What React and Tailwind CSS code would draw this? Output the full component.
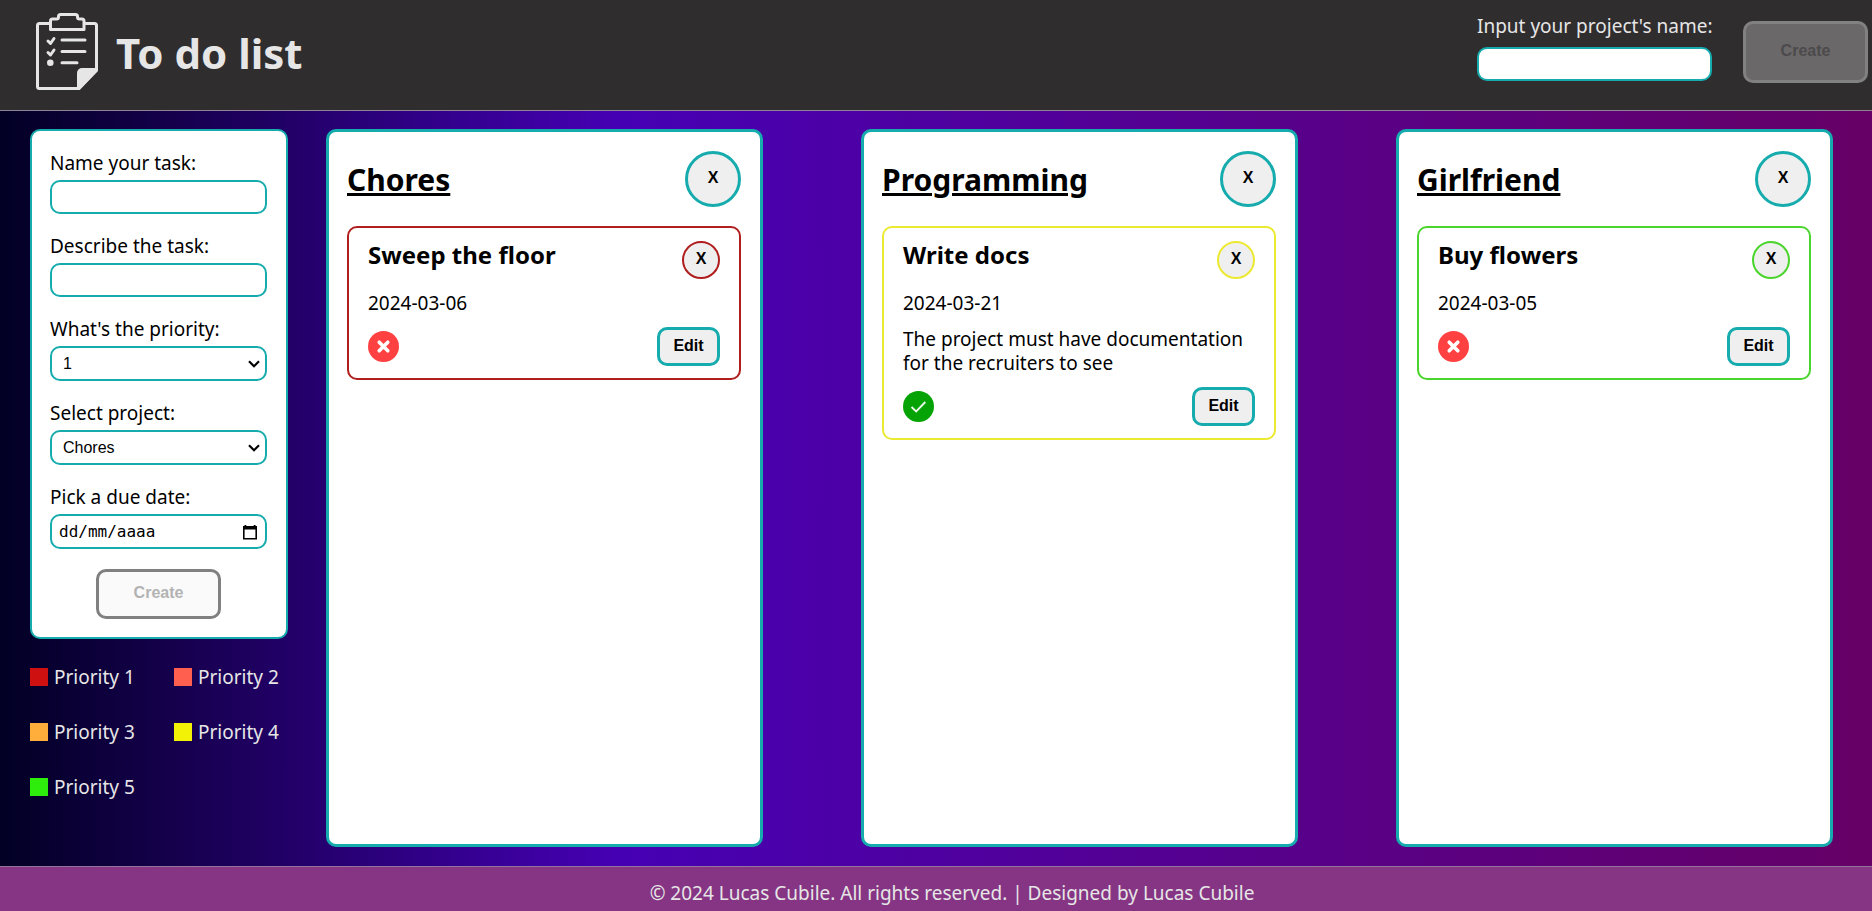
import React from "react";

const priorities = [
  { id: 1, swatch: "bg-[#cf1010]" },
  { id: 2, swatch: "bg-[#ff5f4f]" },
  { id: 3, swatch: "bg-[#ffae3c]" },
  { id: 4, swatch: "bg-[#f2f207]" },
  { id: 5, swatch: "bg-[#2eec0c]" },
];

const projects = [
  {
    name: "Chores",
    tasks: [{ title: "Sweep the floor", date: "2024-03-06", done: false, border: "border-[#b01e1e]" }],
  },
  {
    name: "Programming",
    tasks: [
      {
        title: "Write docs",
        date: "2024-03-21",
        description: "The project must have documentation for the recruiters to see",
        done: true,
        border: "border-[#ecea30]",
      },
    ],
  },
  {
    name: "Girlfriend",
    tasks: [{ title: "Buy flowers", date: "2024-03-05", done: false, border: "border-[#4ad52c]" }],
  },
];

const field =
  "w-full rounded-[10px] border-2 border-[#16abad] bg-white font-['Liberation_Sans',Arial,sans-serif] text-base text-black";

const button = "border-[3px] font-['Liberation_Sans',Arial,sans-serif] text-base font-bold";

function ClipboardLogo() {
  return (
    <svg
      className="h-[77px] w-[62px] shrink-0"
      viewBox="0 0 62 77"
      fill="none"
      stroke="#e6e6e6"
      strokeWidth="3"
      strokeLinecap="round"
      strokeLinejoin="round"
      aria-hidden="true"
    >
      <path d="M13.500 10.500H3.500a2 2 0 0 0-2 2V73.500a2 2 0 0 0 2 2H43L60.500 57V12.500a2 2 0 0 0-2-2H48.500" />
      <path d="M14.500 8a2 2 0 0 1 2-2h4a2 2 0 0 0 2-2v-.500a2 2 0 0 1 2-2h15a2 2 0 0 1 2 2V4a2 2 0 0 0 2 2H46a2 2 0 0 1 2 2v8.500H14.500z" />
      <path d="M26 27H49M26 38.500H49M26 49.800H41" />
      <path d="M12 28l2.500 2.500L18 25.500M12 39.500l2.500 2.500L18 37" />
      <circle cx="14.300" cy="49.800" r="3.300" fill="#e6e6e6" stroke="none" />
      <path d="M41 77V60a5 5 0 0 1 5-5H62V58L43.500 77z" fill="#e6e6e6" stroke="none" />
    </svg>
  );
}

function StatusIcon({ done }) {
  return done ? (
    <svg className="size-[31px]" viewBox="0 0 31 31" role="img" aria-label="Done">
      <circle cx="15.500" cy="15.500" r="15.500" fill="#06a306" />
      <path d="M8.500 16l4.700 4.500L22.300 11" fill="none" stroke="#e9f7e9" strokeWidth="1.900" />
    </svg>
  ) : (
    <svg className="size-[31px]" viewBox="0 0 31 31" role="img" aria-label="Pending">
      <circle cx="15.500" cy="15.500" r="15.500" fill="#ff4141" />
      <path d="M11.200 11.200l8.600 8.600M19.800 11.200l-8.600 8.600" fill="none" stroke="#fff" strokeWidth="3.600" strokeLinecap="round" />
    </svg>
  );
}

function CalendarIcon() {
  return (
    <svg className="size-4" viewBox="0 0 16 16" aria-hidden="true">
      <path d="M2.500 1h1.800v1h7.400V1h1.800v1H15v13.500H1V2h1.500zM2.600 5.500V14h10.800V5.500z" fill="#000" fillRule="evenodd" />
    </svg>
  );
}

function Field({ id, label, children }) {
  return (
    <div className="flex w-full flex-col gap-[5px]">
      <label htmlFor={id}>{label}</label>
      {children}
    </div>
  );
}

function Select({ id, options }) {
  return (
    <div className="relative">
      <select id={id} className={`${field} block h-[35px] appearance-none pr-8 pl-[11px]`}>
        {options.map((option) => (
          <option key={option}>{option}</option>
        ))}
      </select>
      <svg className="pointer-events-none absolute top-3 right-[7px] h-3 w-3" viewBox="0 0 12 12" aria-hidden="true">
        <path d="M1 3.200l5 5 5-5" fill="none" stroke="#000" strokeWidth="2.200" />
      </svg>
    </div>
  );
}

function TaskForm() {
  return (
    <form className="flex flex-col items-center gap-5 rounded-[10px] border-2 border-[#16abad] bg-white pt-5 pr-[19px] pb-[18px] pl-[18px] text-black">
      <Field id="task-name" label="Name your task:">
        <input id="task-name" type="text" className={`${field} h-[34px] px-2`} />
      </Field>
      <Field id="task-description" label="Describe the task:">
        <input id="task-description" type="text" className={`${field} h-[34px] px-2`} />
      </Field>
      <Field id="task-priority" label="What's the priority:">
        <Select id="task-priority" options={priorities.map((p) => p.id)} />
      </Field>
      <Field id="task-project" label="Select project:">
        <Select id="task-project" options={projects.map((p) => p.name)} />
      </Field>
      <Field id="task-date" label="Pick a due date:">
        <div className="flex h-[35px] items-center rounded-[10px] border-2 border-[#16abad] px-[7px]">
          <input
            id="task-date"
            type="text"
            placeholder="dd/mm/aaaa"
            className="min-w-0 flex-1 bg-transparent font-['DejaVu_Sans_Mono',monospace] text-base outline-none placeholder:text-black"
          />
          <button type="button" aria-label="Open calendar">
            <CalendarIcon />
          </button>
        </div>
      </Field>
      <button
        type="submit"
        disabled
        className={`${button} h-[50px] w-[125px] rounded-[10px] border-[#808080] bg-[#fafafa] pb-0.5 text-[#b3b3b3]`}
      >
        Create
      </button>
    </form>
  );
}

function Task({ task }) {
  return (
    <article className={`flex flex-col gap-3 rounded-[10px] border-2 px-[19px] pt-[13px] pb-3 ${task.border}`}>
      <div className="flex items-start justify-between">
        <h3 className="text-2xl leading-7 font-bold">{task.title}</h3>
        <button
          type="button"
          aria-label={`Delete ${task.title}`}
          className={`size-[38px] shrink-0 rounded-full border-2 bg-[#efefef] pb-0.5 font-['Liberation_Sans',Arial,sans-serif] text-base font-bold ${task.border}`}
        >
          X
        </button>
      </div>
      <p>{task.date}</p>
      {task.description && <p>{task.description}</p>}
      <div className="flex items-center justify-between">
        <StatusIcon done={task.done} />
        <button type="button" className={`${button} h-[39px] w-[63px] rounded-[10px] border-[#16abad] bg-[#efefef] pb-0.5`}>
          Edit
        </button>
      </div>
    </article>
  );
}

function Project({ project }) {
  return (
    <section className="flex flex-col gap-[19px] rounded-[10px] border-[3px] border-[#16abad] bg-white py-[19px] pr-[19px] pl-[18px] text-black">
      <div className="flex items-center justify-between">
        <h2 className="pt-0.5 text-[30px] leading-9 font-bold underline">{project.name}</h2>
        <button
          type="button"
          aria-label={`Delete ${project.name}`}
          className={`${button} size-14 shrink-0 rounded-full border-[#16abad] bg-[#efefef] pb-0.5`}
        >
          X
        </button>
      </div>
      {project.tasks.map((task) => (
        <Task key={task.title} task={task} />
      ))}
    </section>
  );
}

export default function App() {
  return (
    <div className="flex min-h-screen flex-col bg-[linear-gradient(90deg,#020024_0%,#4600b4_33%,#660066_100%)] font-['Noto_Sans',sans-serif] text-[19px] leading-6 text-[#e6e6e6]">
      <header className="flex h-[111px] items-start justify-between border-b border-[#8f8296] bg-[#2f2d2e] pr-1 pl-9">
        <div className="flex items-center gap-[18px] pt-[13px]">
          <ClipboardLogo />
          <h1 className="pt-0.5 text-[42px] leading-[50px] font-bold">To do list</h1>
        </div>
        <form className="flex gap-[31px] pt-[14px]">
          <div className="flex w-[235px] flex-col gap-[9px]">
            <label htmlFor="project-name" className="whitespace-nowrap">
              Input your project's name:
            </label>
            <input id="project-name" type="text" className={`${field} h-[34px] px-2`} />
          </div>
          <button
            type="submit"
            disabled
            className={`${button} mt-[7px] h-[62px] w-[125px] rounded-[10px] border-[#828182] bg-[#6a6869] pb-0.5 text-[#4c4a4b]`}
          >
            Create
          </button>
        </form>
      </header>

      <main className="flex flex-1 gap-[38px] pt-[18px] pr-[39px] pb-[19px] pl-[30px]">
        <aside className="flex w-[258px] shrink-0 flex-col gap-[26px]">
          <TaskForm />
          <ul className="grid grid-cols-2 gap-x-[30px] gap-y-[31px]">
            {priorities.map((p) => (
              <li key={p.id} className="flex items-center gap-1.5 whitespace-nowrap">
                <span className={`size-[18px] ${p.swatch}`} />
                Priority {p.id}
              </li>
            ))}
          </ul>
        </aside>
        <div className="grid flex-1 grid-cols-3 gap-[98px]">
          {projects.map((project) => (
            <Project key={project.name} project={project} />
          ))}
        </div>
      </main>

      <footer className="flex h-[45px] items-center justify-center border-t border-[#94729c] bg-[#853583] pt-2 pl-8">
        <p>© 2024 Lucas Cubile. All rights reserved. | Designed by Lucas Cubile</p>
      </footer>
    </div>
  );
}
